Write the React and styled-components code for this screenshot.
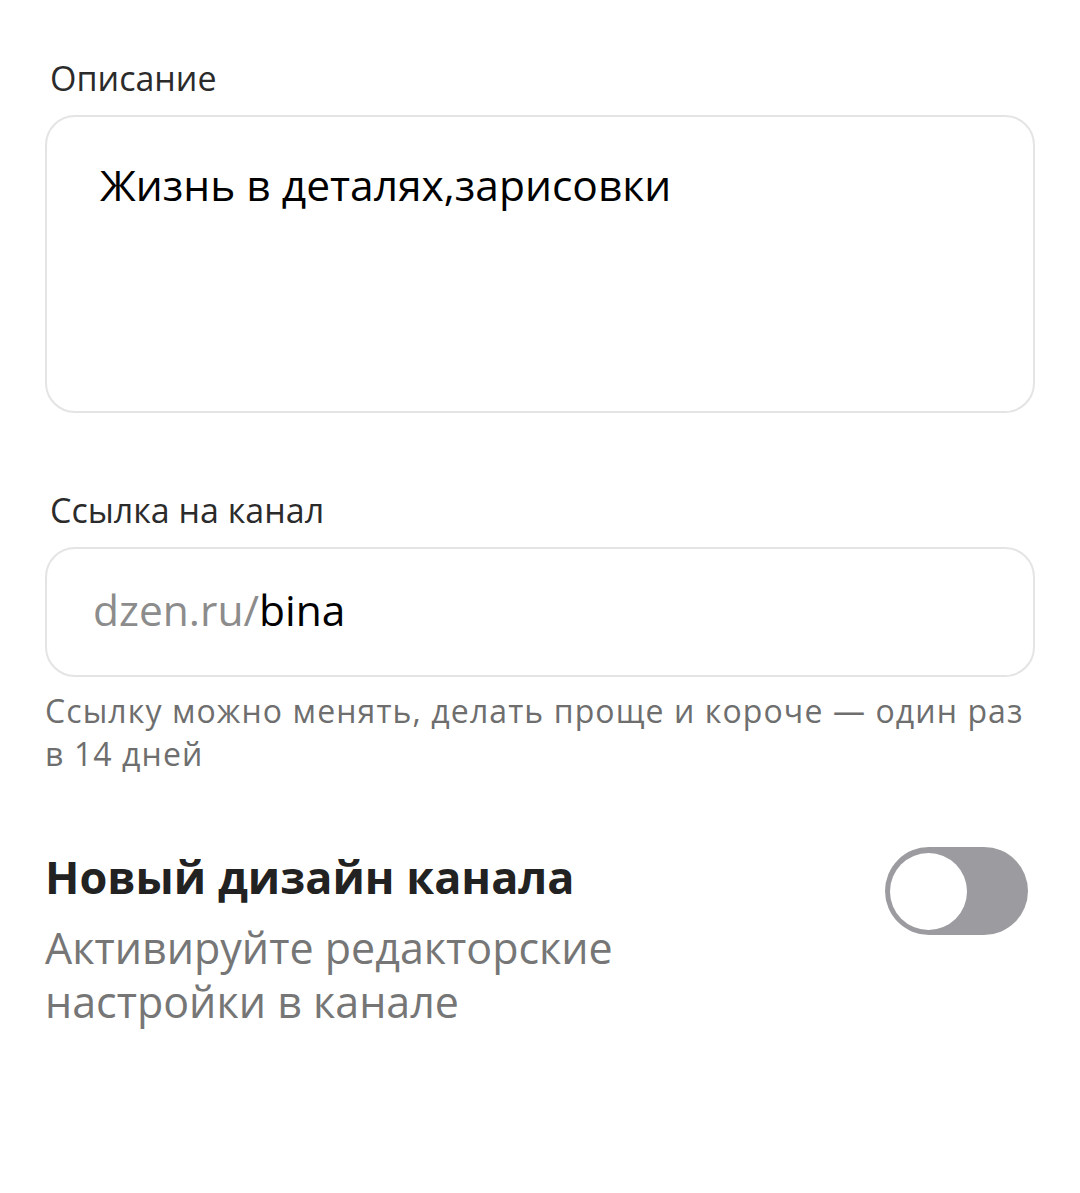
import styled, { createGlobalStyle } from "styled-components";

const GlobalStyle = createGlobalStyle`
  html, body {
    margin: 0;
    padding: 0;
    background: #fff;
  }
  body {
    font-family: "Open Sans", "Noto Sans", sans-serif;
  }
`;

const Page = styled.div`
  width: 1080px;
  min-height: 1193px;
  box-sizing: border-box;
  padding: 55px 45px 0 45px;
  display: flex;
  flex-direction: column;
`;

const Field = styled.div`
  display: flex;
  flex-direction: column;
  margin-bottom: ${(p) => p.$gap || "0"};
`;

const Label = styled.div`
  font-size: 34px;
  line-height: 47px;
  color: #2b2b2b;
  padding-left: 5px;
  margin-bottom: 13px;
`;

const Box = styled.div`
  box-sizing: border-box;
  width: 990px;
  height: ${(p) => p.$height};
  border: 2px solid #e4e4e4;
  border-radius: 30px;
  padding: ${(p) => p.$padding};
  font-size: 42.5px;
  line-height: 56px;
  color: #000;
`;

const Muted = styled.span`
  color: #8c8c8c;
`;

const Hint = styled.div`
  margin-top: 12px;
  font-size: 32px;
  letter-spacing: 1.1px;
  line-height: 43px;
  color: #6e6e6e;
`;

const Row = styled.div`
  display: flex;
  justify-content: space-between;
  align-items: flex-start;
  margin-top: 72px;
`;

const Texts = styled.div`
  display: flex;
  flex-direction: column;
`;

const Title = styled.div`
  font-size: 45px;
  font-weight: 700;
  line-height: 60px;
  color: #222;
  margin-bottom: 14px;
`;

const Sub = styled.div`
  font-size: 43px;
  line-height: 54px;
  color: #767676;
  width: 640px;
`;

const Toggle = styled.div`
  width: 143px;
  height: 88px;
  border-radius: 44px;
  background: #9c9ba0;
  margin-right: 7px;
  display: flex;
  align-items: center;
  padding: 0 5px;
  box-sizing: border-box;
`;

const Knob = styled.div`
  width: 77px;
  height: 77px;
  border-radius: 50%;
  background: #fff;
`;

export default function App() {
  return (
    <>
      <GlobalStyle />
      <Page>
        <Field $gap="74px">
          <Label>Описание</Label>
          <Box $height="298px" $padding="40px 53px">
            Жизнь в деталях,зарисовки
          </Box>
        </Field>
        <Field>
          <Label>Ссылка на канал</Label>
          <Box $height="130px" $padding="33px 46px">
            <Muted>dzen.ru/</Muted>bina
          </Box>
          <Hint>
            Ссылку можно менять, делать проще и короче — один раз
            <br />в 14 дней
          </Hint>
        </Field>
        <Row>
          <Texts>
            <Title>Новый дизайн канала</Title>
            <Sub>Активируйте редакторские настройки в канале</Sub>
          </Texts>
          <Toggle>
            <Knob />
          </Toggle>
        </Row>
      </Page>
    </>
  );
}
